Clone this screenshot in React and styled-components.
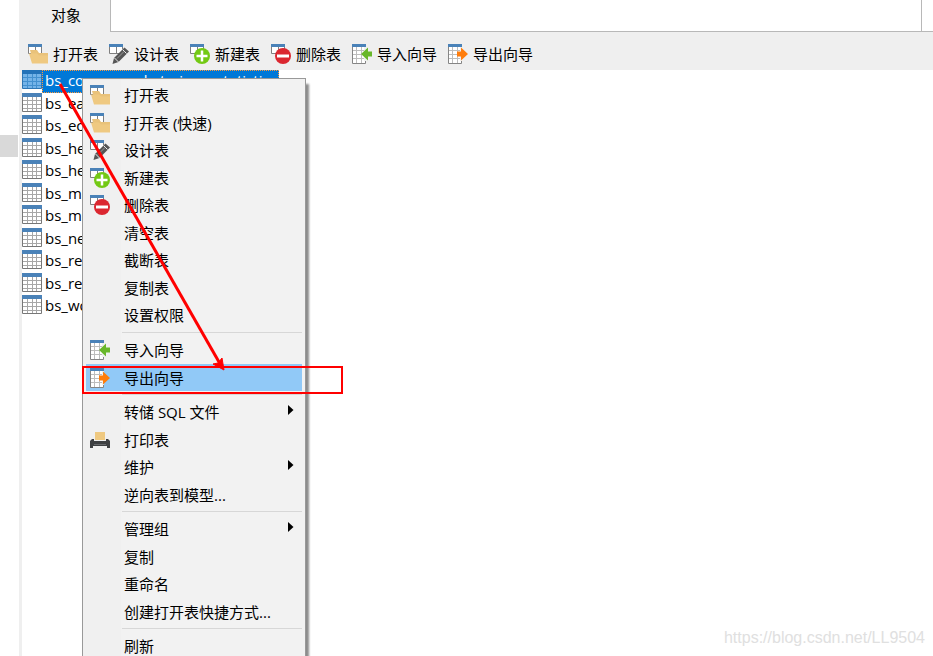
import React from "react";
import styled, { createGlobalStyle, css } from "styled-components";

const GlobalStyle = createGlobalStyle`
  * {
    box-sizing: border-box;
  }

  body {
    margin: 0;
    background: #fff;
    color: #000;
    font-family: "Open Sans", "Noto Sans CJK SC", sans-serif;
    font-size: 15px;
  }

  button {
    border: 0;
    padding: 0;
    background: none;
    color: inherit;
    font: inherit;
  }
`;

const Page = styled.div`
  position: relative;
  display: flex;
  height: 100vh;
  overflow: hidden;
`;

const Gutter = styled.div`
  flex: 0 0 19px;
  padding-top: 135px;
`;

const GutterMark = styled.div`
  width: 18px;
  height: 22px;
  background: #d9d9d9;
`;

const Panel = styled.main`
  flex: 1;
  min-width: 0;
  border-left: 3px solid #efefef;
`;

const TabBar = styled.div`
  display: flex;
  height: 32px;
  background: linear-gradient(90deg, #efefef 88px, #fff 88px);
`;

const Tab = styled.button`
  width: 88px;
  height: 30px;
  line-height: 30px;
`;

const TabSpace = styled.div`
  flex: 1;
  border: 1px solid #b8b8b8;
  border-top: 0;
`;

const TabEnd = styled.div`
  width: 11px;
  border-bottom: 1px solid #b8b8b8;
`;

const Toolbar = styled.div`
  display: flex;
  align-items: center;
  gap: 11px;
  height: 38px;
  padding: 5px 0 0 6px;
  background: #efefef;
`;

const ToolButton = styled.button`
  display: flex;
  align-items: center;
  gap: 5px;
  line-height: 20px;
  white-space: nowrap;
`;

const TableList = styled.ul`
  display: grid;
  grid-template-rows: repeat(11, 1fr);
  width: 257px;
  height: 248px;
  margin: 0;
  padding: 0;
  list-style: none;
`;

const TableRow = styled.li`
  display: flex;
  align-items: stretch;
  min-height: 0;

  svg {
    flex: none;
  }
`;

const TableName = styled.span`
  flex: 1;
  padding-left: 2px;
  border: 1px dotted transparent;
  line-height: 18px;
  white-space: nowrap;
  overflow: hidden;

  ${(props) =>
    props.$selected &&
    css`
      background: #0078d7;
      border-color: #ff9a3c;
      color: #fff;
    `}
`;

const Menu = styled.div`
  position: absolute;
  top: 78px;
  left: 82px;
  width: 224px;
  padding: 2px 3px 12px;
  border: 1px solid #999;
  background: linear-gradient(90deg, #f0f0f0 38px, #f2f2f2 38px);
  box-shadow: 3px 6px 2px rgba(0, 0, 0, 0.45);
`;

const MenuGroup = styled.div`
  & + & {
    padding-top: 7px;
    background: linear-gradient(#d7d7d7, #d7d7d7) 36px 3px / 100% 1px no-repeat;
  }
`;

const MenuItem = styled.button`
  display: grid;
  grid-template-columns: 38px 1fr 14px;
  align-items: center;
  width: 100%;
  height: 28px;
  background: ${(props) => (props.$active ? "#91c9f7" : "none")};
  line-height: 26px;
  text-align: left;
  white-space: nowrap;

  &:nth-child(even) {
    height: 27px;
  }
`;

const IconCell = styled.span`
  display: flex;
  padding-left: 4px;
`;

const Highlight = styled.div`
  position: absolute;
  top: 366px;
  left: 82px;
  width: 261px;
  height: 28px;
  border: 2px solid #f00;
`;

const Arrow = styled.svg`
  position: absolute;
  top: 80px;
  left: 54px;
`;

const Watermark = styled.div`
  position: absolute;
  right: 8px;
  bottom: 8px;
  color: #e0e0e0;
  font-family: "Liberation Sans", sans-serif;
  font-size: 16px;
  line-height: 20px;
`;

function Icon({ children }) {
  return (
    <svg width="20" height="20" viewBox="0 0 20 20" aria-hidden="true">
      {children}
    </svg>
  );
}

function SmallGrid() {
  return (
    <>
      <path d="M.5 2v7.5h13V2M7.500 3v6" fill="#fff" stroke="#808080" />
      <path d="M0 0h14v3H0z" fill="#4a82b8" />
    </>
  );
}

function OpenIcon() {
  return (
    <Icon>
      <SmallGrid />
      <path d="M2 6h7l2 3h9v4H4z" fill="#e9c27a" />
      <path d="M1 9.500h8l2 2h9V19.500H4z" fill="#efc981" />
    </Icon>
  );
}

function DesignIcon() {
  return (
    <Icon>
      <SmallGrid />
      <path d="M3.500 20l1.500-6L15.500 3.500l4.500 4L9.500 18z" fill="#555" />
      <path d="M13.500 5.500l4 4M5.500 14l4 4" stroke="#eee" />
      <path d="M8 14.500l7-7" stroke="#999" />
    </Icon>
  );
}

function NewIcon() {
  return (
    <Icon>
      <SmallGrid />
      <circle cx="12" cy="12" r="8" fill="#73c914" />
      <path d="M12 6.500v11M6.500 12h11" stroke="#fff" strokeWidth="2.500" />
    </Icon>
  );
}

function DeleteIcon() {
  return (
    <Icon>
      <SmallGrid />
      <circle cx="12" cy="12" r="8" fill="#db2730" />
      <path d="M6 12h12" stroke="#fff" strokeWidth="3" />
    </Icon>
  );
}

function WizardSheet() {
  return (
    <>
      <path d="M.5 2v17.500h13V2" fill="#fff" stroke="#858585" />
      <path
        d="M1 6.500h12M1 10.500h12M1 14.500h12M4.500 3v16M9.500 3v16"
        stroke="#bdbdbd"
      />
      <path d="M0 0h14v3H0z" fill="#4a82b8" />
    </>
  );
}

function ImportIcon() {
  return (
    <Icon>
      <WizardSheet />
      <path d="M12 3h4v14h-4z" fill="#f0f0f0" />
      <path d="M9 10L16 3.500v4h4v5h-4v4z" fill="#68b72a" />
    </Icon>
  );
}

function ExportIcon() {
  return (
    <Icon>
      <WizardSheet />
      <path d="M12 3h2v14h-2z" fill="#f0f0f0" />
      <path d="M20 10L13 3.500v4H9v5h4v4z" fill="#ff7d0c" />
    </Icon>
  );
}

function PrintIcon() {
  return (
    <Icon>
      <path d="M5 2h10v8H5z" fill="#efc981" />
      <path d="M0 11l2-2h2v2h12V9h2l2 2v7h-3v-2H3v2H0z" fill="#3d3f42" />
      <path d="M4 14.500h12" stroke="#66686b" />
    </Icon>
  );
}

function TableIcon({ selected }) {
  return (
    <svg width="20" height="20" viewBox="0 0 20 20" aria-hidden="true">
      <path
        d="M.5 1v17.500h19V1"
        fill={selected ? "#74b3e8" : "#fff"}
        stroke={selected ? "#2f76b4" : "#777"}
      />
      <path
        d="M1 7.500h18M1 11.500h18M1 15.500h18M5.500 4v14M10.500 4v14M14.500 4v14"
        stroke={selected ? "#4390cf" : "#a7a7a7"}
      />
      <path d="M0 0h20v4H0z" fill={selected ? "#2372b8" : "#4a82b8"} />
    </svg>
  );
}

function SubmenuMark() {
  return (
    <svg width="6" height="14" viewBox="0 0 6 14" aria-hidden="true">
      <path d="M0 0l5.500 5L0 10z" fill="#000" />
    </svg>
  );
}

const tools = [
  { label: "打开表", icon: OpenIcon },
  { label: "设计表", icon: DesignIcon },
  { label: "新建表", icon: NewIcon },
  { label: "删除表", icon: DeleteIcon },
  { label: "导入向导", icon: ImportIcon },
  { label: "导出向导", icon: ExportIcon },
];

const tables = [
  "bs_conse_market_sieno_statistics",
  "bs_ea",
  "bs_ec",
  "bs_he",
  "bs_he",
  "bs_m",
  "bs_m",
  "bs_ne",
  "bs_re",
  "bs_re",
  "bs_wo",
];

const menuGroups = [
  [
    { label: "打开表", icon: OpenIcon },
    { label: "打开表 (快速)", icon: OpenIcon },
    { label: "设计表", icon: DesignIcon },
    { label: "新建表", icon: NewIcon },
    { label: "删除表", icon: DeleteIcon },
    { label: "清空表" },
    { label: "截断表" },
    { label: "复制表" },
    { label: "设置权限" },
  ],
  [
    { label: "导入向导", icon: ImportIcon },
    { label: "导出向导", icon: ExportIcon, active: true },
  ],
  [
    { label: "转储 SQL 文件", submenu: true },
    { label: "打印表", icon: PrintIcon },
    { label: "维护", submenu: true },
    { label: "逆向表到模型..." },
  ],
  [
    { label: "管理组", submenu: true },
    { label: "复制" },
    { label: "重命名" },
    { label: "创建打开表快捷方式..." },
  ],
  [{ label: "刷新" }],
];

function ContextMenu() {
  return (
    <Menu role="menu">
      {menuGroups.map((group, index) => (
        <MenuGroup key={index}>
          {group.map(({ label, icon: ItemIcon, active, submenu }) => (
            <MenuItem key={label} role="menuitem" $active={active}>
              <IconCell>{ItemIcon && <ItemIcon />}</IconCell>
              <span>{label}</span>
              {submenu && <SubmenuMark />}
            </MenuItem>
          ))}
        </MenuGroup>
      ))}
    </Menu>
  );
}

function App() {
  return (
    <Page>
      <GlobalStyle />
      <Gutter>
        <GutterMark />
      </Gutter>
      <Panel>
        <TabBar>
          <Tab>对象</Tab>
          <TabSpace />
          <TabEnd />
        </TabBar>
        <Toolbar>
          {tools.map(({ label, icon: ToolIcon }) => (
            <ToolButton key={label}>
              <ToolIcon />
              {label}
            </ToolButton>
          ))}
        </Toolbar>
        <TableList>
          {tables.map((name, index) => (
            <TableRow key={index}>
              <TableIcon selected={index === 0} />
              <TableName $selected={index === 0}>{name}</TableName>
            </TableRow>
          ))}
        </TableList>
      </Panel>
      <ContextMenu />
      <Highlight />
      <Arrow width="180" height="295" viewBox="0 0 180 295" aria-hidden="true">
        <path d="M6 4L165 282" stroke="#f00" strokeWidth="3" />
        <path d="M170 290l-11-6 5-1 4-5z" fill="#f00" stroke="#f00" />
      </Arrow>
      <Watermark>https://blog.csdn.net/LL9504</Watermark>
    </Page>
  );
}

export default App;
